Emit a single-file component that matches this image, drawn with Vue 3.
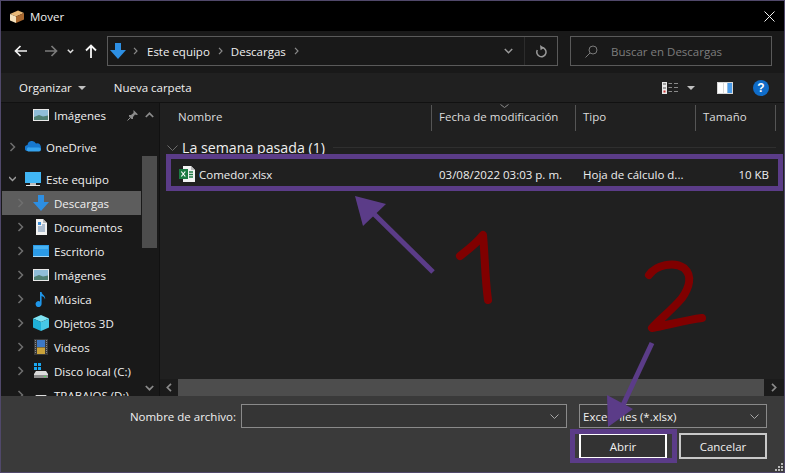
<template>
  <div class="window">
    <header class="titlebar">
      <svg class="title-icon" width="16" height="16" viewBox="0 0 16 16">
        <path d="M1 6l8-3.500 6 2.500-8 3.500z" fill="#e9b877" />
        <path d="M1 6l6 2.500V15l-6-2.500z" fill="#f6e2bd" />
        <path d="M7 8.500L15 5v6.500L7 15z" fill="#a9682f" />
      </svg>
      <span class="title-text">Mover</span>
      <svg class="close" width="11" height="11" viewBox="0 0 11 11">
        <path d="M.5.5l10 10M10.5.5l-10 10" stroke="#f2f2f2" stroke-width="1" fill="none" />
      </svg>
    </header>

    <nav class="navbar">
      <div class="nav-buttons">
        <svg class="nav-btn" width="14" height="12" viewBox="0 0 14 12">
          <path d="M13 6H2M6.500 1L1.500 6l5 5" stroke="#f2f2f2" stroke-width="1.700" fill="none" />
        </svg>
        <svg class="nav-btn forward" width="14" height="12" viewBox="0 0 14 12">
          <path d="M1 6h11M7.500 1l5 5-5 5" stroke="#7b7b7b" stroke-width="1.700" fill="none" />
        </svg>
        <svg class="nav-btn history" width="7" height="5" viewBox="0 0 7 5">
          <path d="M.8.8l2.700 2.700L6.200.8" stroke="#e0e0e0" stroke-width="1.500" fill="none" />
        </svg>
        <svg class="nav-btn up" width="12" height="14" viewBox="0 0 12 14">
          <path d="M6 14V2M1 6.500l5-5 5 5" stroke="#f5f5f5" stroke-width="1.800" fill="none" />
        </svg>
      </div>
      <div class="address">
        <svg class="addr-icon" width="16" height="16" viewBox="0 0 16 16">
          <path d="M5 0h6v7h5l-8 9-8-9h5z" fill="#2d8fe3" />
        </svg>
        <svg class="crumb-sep first" width="5" height="8" viewBox="0 0 5 8"><path d="M1 .8L4 4 1 7.200" stroke="#8a8a8a" stroke-width="1.200" fill="none" /></svg>
        <span class="crumb">Este equipo</span>
        <svg class="crumb-sep" width="5" height="8" viewBox="0 0 5 8"><path d="M1 .8L4 4 1 7.200" stroke="#8a8a8a" stroke-width="1.200" fill="none" /></svg>
        <span class="crumb">Descargas</span>
        <svg class="crumb-sep" width="5" height="8" viewBox="0 0 5 8"><path d="M1 .8L4 4 1 7.200" stroke="#8a8a8a" stroke-width="1.200" fill="none" /></svg>
        <svg class="addr-drop" width="9" height="6" viewBox="0 0 9 6"><path d="M.8 1l3.700 3.700L8.200 1" stroke="#9a9a9a" stroke-width="1.500" fill="none" /></svg>
        <div class="refresh">
          <svg width="12" height="13" viewBox="0 0 12 13">
            <path d="M7.500 2.600A4.600 4.600 0 1 1 2.300 5" stroke="#9a9a9a" stroke-width="1.500" fill="none" />
            <path d="M5 0l4 2.700-3.400 2.500z" fill="#9a9a9a" />
          </svg>
        </div>
      </div>
      <div class="search">
        <svg width="13" height="13" viewBox="0 0 13 13">
          <circle cx="8" cy="5" r="4" stroke="#7a7a7a" fill="none" />
          <path d="M5 8l-4.500 4.500" stroke="#7a7a7a" fill="none" />
        </svg>
        <span>Buscar en Descargas</span>
      </div>
    </nav>

    <div class="toolbar">
      <span class="tool organize">Organizar</span>
      <span class="caret"></span>
      <span class="tool new-folder">Nueva carpeta</span>
      <svg class="view-icon" width="16" height="12" viewBox="0 0 16 12">
        <rect width="5" height="12" fill="#e8e8e8" />
        <path d="M1 2h3M1 6h3" stroke="#555" />
        <rect x="1.500" y="8.500" width="2" height="2" fill="#c33" />
        <path d="M6.500 1.500H10M12 1.500h4M6.500 5.500H10M12 5.500h4M6.500 9.500H10M12 9.500h4" stroke="#8a8a8a" />
      </svg>
      <span class="caret view-caret"></span>
      <svg class="pane-icon" width="16" height="12" viewBox="0 0 16 12">
        <rect width="16" height="12" fill="#d8d8d8" />
        <rect x="1" y="1" width="5" height="10" fill="#fff" />
        <rect x="7" y="1" width="3" height="10" fill="#fff" />
        <rect x="10.500" y="1" width="4.500" height="10" fill="#4a9be8" />
      </svg>
      <span class="help">?</span>
    </div>

    <div class="content">
      <aside class="sidebar">
        <ul class="tree">
          <li
            v-for="item in treeItems"
            :key="item.label + item.icon"
            class="tree-row"
            :class="{ child: item.child, selected: item.selected, spaced: item.spaced }"
          >
            <svg class="chev" width="7" height="10" viewBox="0 0 7 10">
              <path v-if="item.open" d="M0 3l3.500 3.500L7 3" stroke="#9c9c9c" stroke-width="1.500" fill="none" />
              <path v-else-if="!item.noChev" d="M1.500 1l4 4-4 4" stroke="#6f6f6f" stroke-width="1.500" fill="none" />
            </svg>
            <svg class="tree-icon" width="16" height="16" viewBox="0 0 16 16">
              <template v-if="item.icon === 'pictures'">
                <rect y="2" width="16" height="12" fill="#e9e9e9" />
                <rect x="1" y="3" width="14" height="10" fill="#8fbdd8" />
                <path d="M1 10l5-2 4 1.500 5-1V13H1z" fill="#4f7f73" />
              </template>
              <template v-else-if="item.icon === 'cloud'">
                <path d="M3 13a3 3 0 0 1-.5-6A4.500 4.500 0 0 1 11 5.500 3.800 3.800 0 0 1 13 13z" fill="#1678cf" transform="translate(0 -1)" />
                <path d="M3 12.500h11a2 2 0 0 0 0-4H5a2.200 2.200 0 0 0-2 4z" fill="#35a3ee" />
              </template>
              <template v-else-if="item.icon === 'monitor'">
                <rect y="1" width="16" height="11" fill="#41b6f5" />
                <rect x="5" y="12" width="6" height="2" fill="#bdbdbd" />
                <rect x="1" y="14" width="14" height="1" fill="#e6e6e6" />
              </template>
              <template v-else-if="item.icon === 'download'">
                <path d="M5 0h6v7h5l-8 9-8-9h5z" fill="#2d8fe3" />
              </template>
              <template v-else-if="item.icon === 'documents'">
                <path d="M3 0h7l4 4v12H3z" fill="#f2f2f2" />
                <path d="M10 0l4 4h-4z" fill="#b9b9b9" />
                <path d="M5 3h3v3H5z" fill="#3c8fd8" />
                <path d="M5 8h7M5 10h7M5 12h7M9 6h3" stroke="#6a8bb0" />
              </template>
              <template v-else-if="item.icon === 'desktop'">
                <rect y="2" width="16" height="12" fill="#2b9be8" />
                <rect y="13" width="16" height="1" fill="#a9d9f7" />
                <rect x="1" y="3" width="14" height="3" fill="#49b3f3" />
              </template>
              <template v-else-if="item.icon === 'music'">
                <path d="M7 1h1.600c.3 3 4.400 3.600 3.400 7.500-.3-2-2-3-3.400-3.400V13a3 3 0 1 1-1.600-2.600z" fill="#1f96e8" />
              </template>
              <template v-else-if="item.icon === 'cube'">
                <path d="M8 0l8 3.500-8 3.500-8-3.500z" fill="#7fe3f3" />
                <path d="M0 3.500l8 3.500v9l-8-3.500z" fill="#1fb0d8" />
                <path d="M16 3.500L8 7v9l8-3.500z" fill="#47c8e6" />
              </template>
              <template v-else-if="item.icon === 'film'">
                <rect x="1" width="14" height="16" fill="#3a3a3a" />
                <rect x="4" y="1" width="8" height="7" fill="#3d78c4" />
                <rect x="4" y="8.500" width="8" height="6.500" fill="#c9a23a" />
                <path d="M2.500 1v14M13.500 1v14" stroke="#8a8a8a" stroke-dasharray="1 1" />
              </template>
              <template v-else-if="item.icon === 'windrive'">
                <path d="M1 0h3v3H1zM5 0h3v3H5zM1 4h3v3H1zM5 4h3v3H5z" fill="#19a6ef" />
                <path d="M3 8h10l2 3v4H1v-4z" fill="#dcdcdc" />
                <rect x="1" y="12" width="14" height="3" fill="#8f8f8f" />
                <rect x="11" y="13" width="2" height="1" fill="#4ee05a" />
              </template>
              <template v-else-if="item.icon === 'drive'">
                <path d="M3 8h10l2 3v4H1v-4z" fill="#dcdcdc" />
              </template>
            </svg>
            <span class="tree-label">{{ item.label }}</span>
            <template v-if="item.pinned">
              <svg class="pin" width="11" height="11" viewBox="0 0 11 11">
                <path d="M6.500 0L11 4.500 9.500 5 8 4.500 6 7 6 9 4.500 9 2 6.500 2 5 4 5 6.500 3z" fill="#8d8d8d" />
                <path d="M3.500 7.500L.5 10.500" stroke="#8d8d8d" />
              </svg>
            </template>
          </li>
        </ul>
        <div class="side-scroll">
          <svg class="scroll-arrow" width="9" height="6" viewBox="0 0 9 6"><path d="M.8 5L4.500 1.300 8.200 5" stroke="#8a8a8a" stroke-width="1.700" fill="none" /></svg>
          <div class="side-thumb"></div>
          <svg class="scroll-arrow bottom" width="9" height="6" viewBox="0 0 9 6"><path d="M.8 1l3.700 3.700L8.200 1" stroke="#8a8a8a" stroke-width="1.700" fill="none" /></svg>
        </div>
      </aside>

      <main class="files">
        <div class="list-head">
          <div v-for="col in columns" :key="col.label" class="col" :style="{ width: col.width + 'px' }">{{ col.label }}</div>
          <svg class="sort" width="9" height="4" viewBox="0 0 9 4"><path d="M.5.5l4 3 4-3" stroke="#8a8a8a" fill="none" /></svg>
        </div>
        <div class="group">
          <svg width="11" height="6" viewBox="0 0 11 6"><path d="M.5.5l5 5 5-5" stroke="#6c6c6c" fill="none" /></svg>
          <span class="group-name">La semana pasada (1)</span>
          <span class="group-line"></span>
        </div>
        <div class="file-row">
          <svg class="xl-icon" width="16" height="16" viewBox="0 0 16 16">
            <path d="M4 0h8l4 4v12H4z" fill="#f4f4f4" />
            <path d="M12 0l4 4h-4z" fill="#bcbcbc" />
            <path d="M10 6h4M10 8.500h4M10 11h4" stroke="#1f7a45" stroke-width="1.300" />
            <rect y="3" width="9" height="10" fill="#1b7a42" />
            <path d="M2.300 5.500l4 5M6.300 5.500l-4 5" stroke="#fff" stroke-width="1.200" />
          </svg>
          <span class="file-name">Comedor.xlsx</span>
          <span class="file-date">03/08/2022 03:03 p. m.</span>
          <span class="file-type">Hoja de cálculo d...</span>
          <span class="file-size">10 KB</span>
        </div>
        <div class="h-scroll">
          <div class="h-btn">
            <svg width="6" height="9" viewBox="0 0 6 9"><path d="M5 .8L1.300 4.500 5 8.200" stroke="#8a8a8a" stroke-width="1.700" fill="none" /></svg>
          </div>
          <div class="h-thumb"></div>
          <div class="h-btn">
            <svg width="6" height="9" viewBox="0 0 6 9"><path d="M1 .8l3.700 3.700L1 8.200" stroke="#8a8a8a" stroke-width="1.700" fill="none" /></svg>
          </div>
        </div>
      </main>
    </div>

    <footer class="footer">
      <div class="field-row">
        <label class="field-label">Nombre de archivo:</label>
        <div class="combo name-combo">
          <svg width="9" height="5" viewBox="0 0 9 5"><path d="M.5.5l4 4 4-4" stroke="#a8a8a8" fill="none" /></svg>
        </div>
        <div class="combo type-combo">
          <span>Excel Files (*.xlsx)</span>
          <svg width="9" height="5" viewBox="0 0 9 5"><path d="M.5.5l4 4 4-4" stroke="#a8a8a8" fill="none" /></svg>
        </div>
      </div>
      <div class="button-row">
        <button class="btn primary">Abrir</button>
        <button class="btn">Cancelar</button>
      </div>
      <svg class="grip" width="8" height="8" viewBox="0 0 8 8">
        <path d="M6 0h2v2H6zM3 3h2v2H3zM6 3h2v2H6zM0 6h2v2H0zM3 6h2v2H3zM6 6h2v2H6z" fill="#b8b8b8" />
      </svg>
    </footer>

    <!-- annotations drawn on top of the dialog -->
    <svg class="marks" width="785" height="473" viewBox="0 0 785 473">
      <rect x="168.500" y="156.500" width="612" height="32" fill="none" stroke="#5b3c88" stroke-width="5" />
      <rect x="572.500" y="431.500" width="102" height="29" fill="none" stroke="#5b3c88" stroke-width="5" />
      <path d="M433 272L370 210" stroke="#5b3c88" stroke-width="5" fill="none" />
      <path d="M355 196l31 8-23 22z" fill="#5b3c88" />
      <path d="M652 343l-29 62" stroke="#5b3c88" stroke-width="5" fill="none" />
      <path d="M607 395l26 14-25 18z" fill="#5b3c88" />
      <path d="M460 256c9-7 17-13 23-21 2 22 2 44 5 65" stroke="#800000" stroke-width="8" stroke-linecap="round" stroke-linejoin="round" fill="none" />
      <path d="M649 275c7-10 25-14 35-7 9 8 5 20-2 30-10 12-21 20-30 30 16-3 34-8 50-10" stroke="#800000" stroke-width="8" stroke-linecap="round" stroke-linejoin="round" fill="none" />
    </svg>
  </div>
</template>

<script setup>
const treeItems = [
  { label: 'Imágenes', icon: 'pictures', child: true, noChev: true, pinned: true, spaced: true },
  { label: 'OneDrive', icon: 'cloud', spaced: true },
  { label: 'Este equipo', icon: 'monitor', open: true },
  { label: 'Descargas', icon: 'download', child: true, selected: true },
  { label: 'Documentos', icon: 'documents', child: true },
  { label: 'Escritorio', icon: 'desktop', child: true },
  { label: 'Imágenes', icon: 'pictures', child: true },
  { label: 'Música', icon: 'music', child: true },
  { label: 'Objetos 3D', icon: 'cube', child: true },
  { label: 'Videos', icon: 'film', child: true },
  { label: 'Disco local (C:)', icon: 'windrive', child: true },
  { label: 'TRABAJOS (D:)', icon: 'drive', child: true }
]

const columns = [
  { label: 'Nombre', width: 272 },
  { label: 'Fecha de modificación', width: 144 },
  { label: 'Tipo', width: 120 },
  { label: 'Tamaño', width: 80 }
]
</script>

<style>
html, body {
  margin: 0;
  background: #191919;
}
</style>

<style scoped>
* {
  box-sizing: border-box;
}

.window {
  position: relative;
  width: 785px;
  height: 473px;
  border: 1px solid #50486a;
  display: flex;
  flex-direction: column;
  overflow: hidden;
  font-family: "Open Sans", "Noto Sans", sans-serif;
  font-size: 11.5px;
  color: #f0f0f0;
  background: #191919;
}

.titlebar {
  height: 30px;
  flex: none;
  background: #000;
  display: flex;
  align-items: center;
  padding: 0 10px 0 8px;
}

.title-text {
  margin-left: 5px;
}

.close {
  margin-left: auto;
  margin-right: -1px;
}

.navbar {
  height: 42px;
  flex: none;
  background: #191919;
  display: flex;
  align-items: flex-start;
  padding-top: 5px;
}

.nav-buttons {
  width: 106px;
  height: 30px;
  display: flex;
  align-items: center;
  flex: none;
}

.nav-btn {
  margin-left: 13px;
  flex: none;
}

.nav-btn.forward {
  margin-left: 16px;
}

.nav-btn.history {
  margin-left: 9px;
}

.nav-btn.up {
  margin-left: 11px;
}

.address {
  width: 451px;
  height: 30px;
  flex: none;
  border: 1px solid #5a5a5a;
  display: flex;
  align-items: center;
  padding-left: 2px;
}

.crumb-sep {
  margin: 0 8px;
  flex: none;
}

.crumb-sep.first {
  margin-left: 7px;
  margin-right: 9px;
}

.addr-drop {
  margin-left: auto;
  margin-right: 11px;
}

.refresh {
  width: 33px;
  height: 100%;
  border-left: 1px solid #2c2c2c;
  display: flex;
  align-items: center;
  justify-content: center;
}

.search {
  width: 202px;
  height: 30px;
  margin-left: 12px;
  flex: none;
  border: 1px solid #5a5a5a;
  display: flex;
  align-items: center;
  padding-left: 14px;
  gap: 13px;
  color: #7d7d7d;
}

.toolbar {
  height: 30px;
  flex: none;
  background: #202020;
  border-bottom: 1px solid #111;
  display: flex;
  align-items: center;
  padding-left: 18px;
}

.caret {
  width: 0;
  height: 0;
  margin-left: 6px;
  border-left: 4px solid transparent;
  border-right: 4px solid transparent;
  border-top: 4px solid #c0c0c0;
}

.new-folder {
  margin-left: 28px;
}

.view-icon {
  margin-left: auto;
}

.view-caret {
  margin-left: 9px;
}

.pane-icon {
  margin-left: 22px;
}

.help {
  width: 16px;
  height: 16px;
  margin: 0 15px 0 20px;
  border-radius: 50%;
  background: #0f6cc9;
  color: #fff;
  font-family: "Liberation Sans", sans-serif;
  font-size: 12px;
  font-weight: 700;
  line-height: 16px;
  text-align: center;
}

.content {
  flex: 1;
  min-height: 0;
  display: flex;
}

.sidebar {
  width: 159px;
  flex: none;
  display: flex;
  background: #191919;
  border-right: 1px solid #111;
}

.tree {
  width: 140px;
  flex: none;
  margin: 0;
  padding: 0;
  list-style: none;
  overflow: hidden;
}

.tree-row {
  height: 24px;
  display: flex;
  align-items: center;
  padding-left: 8px;
  white-space: nowrap;
}

.tree-row.child {
  padding-left: 15px;
  margin-left: 1px;
}

.tree-row.spaced {
  margin-bottom: 8px;
}

.tree-row.selected {
  background: #5d5d5d;
}

.tree-icon {
  margin-left: 9px;
  margin-right: 5px;
  flex: none;
}

.chev {
  flex: none;
}

.pin {
  margin-left: 21px;
  flex: none;
}

.side-scroll {
  width: 16px;
  flex: none;
  position: relative;
  display: flex;
  flex-direction: column;
  align-items: center;
}

.scroll-arrow {
  margin-top: 9px;
  flex: none;
}

.scroll-arrow.bottom {
  margin-top: auto;
  margin-bottom: 5px;
}

.side-thumb {
  width: 15px;
  height: 92px;
  margin-top: 38px;
  background: #4d4d4d;
}

.files {
  flex: 1;
  min-width: 0;
  display: flex;
  flex-direction: column;
  background: #202020;
}

.list-head {
  position: relative;
  height: 27px;
  flex: none;
  display: flex;
  padding-top: 2px;
}

.col {
  height: 26px;
  line-height: 24px;
  padding-left: 7px;
  border-right: 1px solid #555;
  color: #dcdcdc;
  flex: none;
}

.col:first-child {
  padding-left: 18px;
}

.sort {
  position: absolute;
  left: 340px;
  top: 1px;
}

.group {
  height: 28px;
  flex: none;
  display: flex;
  align-items: center;
  padding: 7px 8px 0 7px;
}

.group-name {
  margin-left: 4px;
  font-size: 14.2px;
}

.group-line {
  flex: 1;
  height: 1px;
  margin-left: 8px;
  background: #2f2f2f;
}

.file-row {
  height: 24px;
  margin-top: 4px;
  flex: none;
  display: flex;
  align-items: center;
  padding-left: 19px;
  color: #eee;
}

.file-name {
  width: 240px;
  margin-left: 4px;
}

.file-date {
  width: 144px;
}

.file-type {
  width: 120px;
}

.file-size {
  width: 66px;
  text-align: right;
}

.h-scroll {
  height: 17px;
  margin-top: auto;
  margin-bottom: 0;
  flex: none;
  display: flex;
  background: #1b1b1b;
}

.h-btn {
  width: 18px;
  flex: none;
  display: flex;
  align-items: center;
  justify-content: center;
}

.h-btn:last-child {
  width: 20px;
}

.h-thumb {
  flex: 1;
  background: #4d4d4d;
}

.footer {
  position: relative;
  height: 76px;
  flex: none;
  background: #3a3a3a;
  padding-top: 8px;
}

.field-row {
  display: flex;
  align-items: center;
}

.field-label {
  width: 235px;
  text-align: right;
}

.combo {
  height: 24px;
  border: 1px solid #8a8a8a;
  background: #353535;
  display: flex;
  align-items: center;
  justify-content: space-between;
  padding: 0 7px 0 3px;
}

.combo svg {
  margin-left: auto;
}

.name-combo {
  width: 326px;
  margin-left: 5px;
}

.type-combo {
  width: 188px;
  margin-left: 12px;
}

.button-row {
  display: flex;
  justify-content: flex-end;
  gap: 12px;
  margin-top: 5px;
  padding-right: 17px;
}

.btn {
  width: 88px;
  height: 26px;
  padding: 0;
  border: 2px solid #c8c8c8;
  background: #333;
  color: #f0f0f0;
  font: inherit;
}

.btn.primary {
  border-color: #fff;
}

.grip {
  position: absolute;
  right: 1px;
  bottom: 1px;
}

.marks {
  position: absolute;
  left: -1px;
  top: -1px;
  pointer-events: none;
}
</style>
